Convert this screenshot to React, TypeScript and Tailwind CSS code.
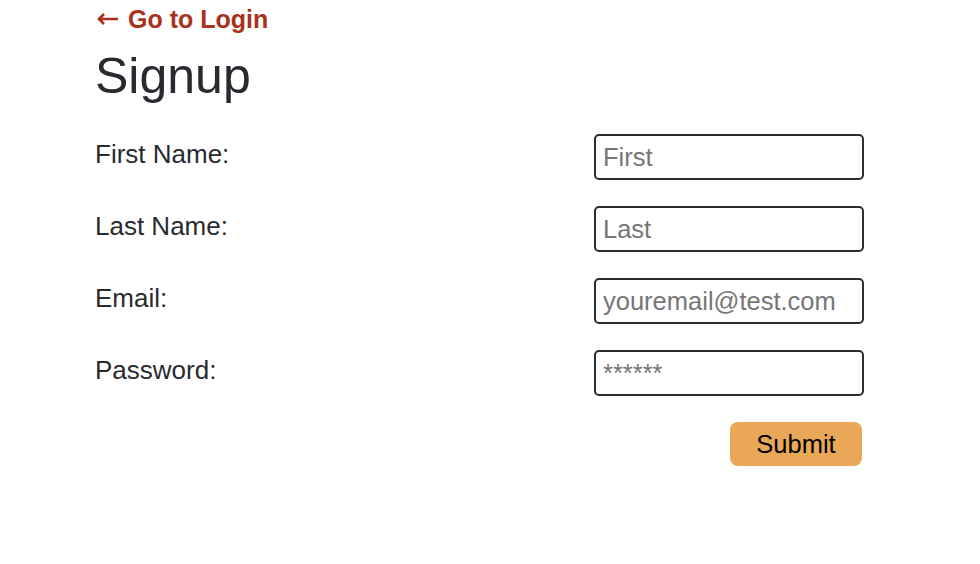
const fields = [
  { label: 'First Name:', type: 'text', placeholder: 'First' },
  { label: 'Last Name:', type: 'text', placeholder: 'Last' },
  { label: 'Email:', type: 'email', placeholder: 'youremail@test.com' },
  { label: 'Password:', type: 'password', placeholder: '******' },
]

export default function App() {
  return (
    <div className="min-h-screen bg-white font-['Liberation_Sans',Arial,sans-serif] text-[#272b30]">
      <div className="ml-[95px] w-[769px]">
        <a
          href="#"
          className="flex items-center gap-[9px] pt-[4px] text-[25px] leading-[30px] font-bold text-[#a8321c]"
        >
          <svg width="22" height="12" viewBox="0 0 22 12" className="-mt-[1px] ml-[2px]">
            <path d="M21 6H2M7 1 2 6l5 5" fill="none" stroke="currentColor" strokeWidth="2.6" />
          </svg>
          Go to Login
        </a>
        <h1 className="mt-[13px] text-[50px] leading-[58px] font-normal">Signup</h1>

        <form className="mt-[29px] flex flex-col gap-[26px]">
          {fields.map((f) => (
            <div key={f.label} className="flex items-start justify-between">
              <label className="pt-[5px] text-[26px] leading-[30px]">{f.label}</label>
              <input
                type={f.type}
                placeholder={f.placeholder}
                className="h-[46px] w-[270px] rounded-[5px] border-2 border-[#2a2e33] px-[7px] text-[25.5px] text-[#272b30] placeholder:text-[#767676] outline-none"
              />
            </div>
          ))}
          <div className="flex justify-end pr-[2px]">
            <button
              type="button"
              className="h-[44px] w-[132px] rounded-[8px] bg-[#e9a857] text-[25.5px] text-black"
            >
              Submit
            </button>
          </div>
        </form>
      </div>
    </div>
  )
}
